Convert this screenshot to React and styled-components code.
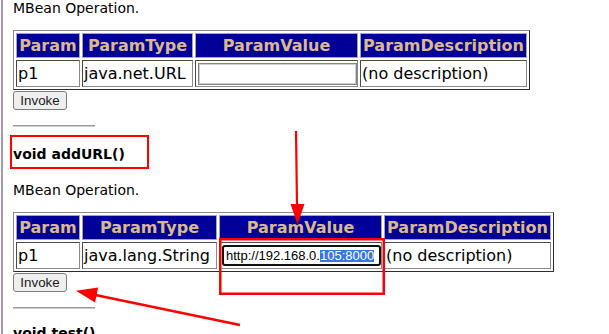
import React from 'react';
import styled, { createGlobalStyle } from 'styled-components';

const Global = createGlobalStyle`
  html, body { margin: 0; padding: 0; background: #fff; }
  body {
    font-family: "DejaVu Sans", Verdana, sans-serif;
    color: #000;
    overflow: hidden;
  }
  *, *::before, *::after { box-sizing: border-box; }
`;

const Window = styled.div`
  position: relative;
  width: 609px;
  height: 334px;
  overflow: hidden;
  padding-left: 1px;
  background: #fff;
`;

const Frame = styled.div`
  height: 100%;
  border-left: 2px solid #a597ab;
  padding-left: 10px;
`;

const Note = styled.p`
  margin: ${p => p.$top || 0}px 0 14px;
  font-size: 14px;
  line-height: 16px;
`;

const OpTitle = styled.h3`
  margin: ${p => p.$top}px 0 0;
  font-size: 14px;
  line-height: 16px;
  font-weight: bold;
`;

const ParamTable = styled.table`
  border-collapse: separate;
  border-spacing: 2px;
  border: 1px solid;
  border-color: #8a8a8a #2e2e2e #2e2e2e #8a8a8a;
  table-layout: fixed;
  width: ${p => p.$width}px;
  font-size: 16px;
`;

const HeadCell = styled.th`
  width: ${p => p.$w}px;
  height: 25px;
  padding: 0 1px;
  background: #000099;
  color: #dbb98b;
  font-weight: bold;
  text-align: center;
  white-space: nowrap;
  overflow: hidden;
  border: 1px solid #a6a6a6;
`;

const Cell = styled.td`
  height: 27px;
  padding: 0 1px 0 ${p => (p.$field ? 2 : 1)}px;
  text-align: left;
  white-space: nowrap;
  overflow: hidden;
  border: 1px solid;
  border-color: #4a4a4a #8c8c8c #8c8c8c #4a4a4a;
`;

const ValueInput = styled.input`
  display: block;
  width: 159px;
  height: 22px;
  margin: 0;
  padding: 1px 2px;
  font-family: "Liberation Sans", Arial, sans-serif;
  font-size: 13px;
  background: #fff;
  border: 1px solid #858585;
  box-shadow: inset 0 0 0 1px #cfcfcf;
  outline: none;
`;

const FocusedField = styled.div`
  width: 159px;
  height: 21px;
  padding: 0 2px;
  border: 2px solid #111;
  border-radius: 3px;
  background: #fff;
  font-family: "Liberation Sans", Arial, sans-serif;
  font-size: 13px;
  line-height: 17px;
  white-space: nowrap;
  overflow: hidden;
  color: #000;
`;

const Selected = styled.span`
  display: inline-block;
  line-height: 12px;
  background: #3a76e0;
  color: #fff;
`;

const InvokeButton = styled.button`
  display: block;
  width: 54px;
  height: 19px;
  margin: 1px 0 0;
  padding: 0 6px;
  font-family: "Liberation Sans", Arial, sans-serif;
  font-size: 13.33px;
  line-height: 15px;
  color: #1a1a1a;
  background: #efefef;
  border: 1px solid #7c7c7c;
  border-radius: 3px;
`;

const Rule = styled.hr`
  width: 82px;
  height: 2px;
  margin: 15px 0 0;
  border: 0;
  border-top: 1px solid #9a9a9a;
  border-bottom: 1px solid #cdcdcd;
`;

const Overlay = styled.svg`
  position: absolute;
  left: 0;
  top: 0;
  pointer-events: none;
`;

function Operation({ widths, type, field }) {
  const total = widths.reduce((a, b) => a + b, 0) + 12;
  const heads = ['Param', 'ParamType', 'ParamValue', 'ParamDescription'];
  return (
    <>
      <ParamTable $width={total}>
        <thead>
          <tr>
            {heads.map((h, i) => (
              <HeadCell key={h} $w={widths[i]}>{h}</HeadCell>
            ))}
          </tr>
        </thead>
        <tbody>
          <tr>
            <Cell>p1</Cell>
            <Cell>{type}</Cell>
            <Cell $field>{field}</Cell>
            <Cell>(no description)</Cell>
          </tr>
        </tbody>
      </ParamTable>
      <InvokeButton type="button">Invoke</InvokeButton>
      <Rule />
    </>
  );
}

export default function App() {
  return (
    <>
      <Global />
      <Window>
        <Frame>
          <Note>MBean Operation.</Note>
          <Operation
            widths={[64, 111, 163, 167]}
            type="java.net.URL"
            field={<ValueInput type="text" defaultValue="" />}
          />
          <OpTitle $top={19}>void addURL()</OpTitle>
          <Note $top={20}>MBean Operation.</Note>
          <Operation
            widths={[64, 135, 163, 167]}
            type="java.lang.String"
            field={
              <FocusedField>
                http://192.168.0.<Selected>105:8000</Selected>
              </FocusedField>
            }
          />
          <OpTitle $top={16}>void test()</OpTitle>
        </Frame>
        <Overlay width="609" height="334" viewBox="0 0 609 334">
          <g fill="none" stroke="#ff0000">
            <rect x="11" y="136" width="137" height="32" strokeWidth="2" />
            <rect x="220.25" y="239.25" width="163.5" height="54.5" strokeWidth="2.5" />
            <line x1="296" y1="131" x2="297" y2="206" strokeWidth="2.2" />
            <line x1="240" y1="325" x2="93" y2="294.5" strokeWidth="2.4" />
          </g>
          <g fill="#ff0000">
            <polygon points="290.5,204 304.5,204 297.5,224" />
            <polygon points="76,290.7 98.1,287.4 95.1,302.4" />
          </g>
        </Overlay>
      </Window>
    </>
  );
}
